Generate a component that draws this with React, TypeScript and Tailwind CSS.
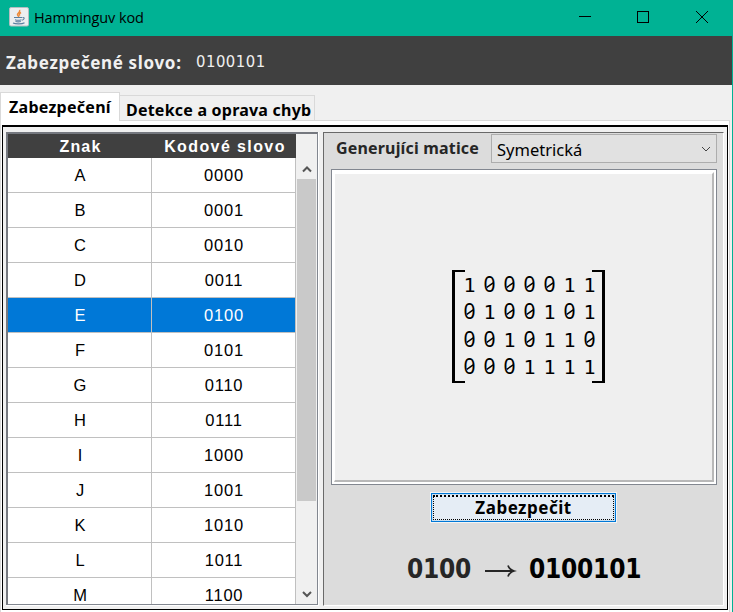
const uiFont = "font-['Noto_Sans',sans-serif]";
const digitFont = "font-['DejaVu_Sans_Condensed','DejaVu_Sans',sans-serif] [font-stretch:condensed]";

const rows = [
  ['A', '0000'], ['B', '0001'], ['C', '0010'], ['D', '0011'], ['E', '0100'],
  ['F', '0101'], ['G', '0110'], ['H', '0111'], ['I', '1000'], ['J', '1001'],
  ['K', '1010'], ['L', '1011'], ['M', '1100'],
];

const matrix = ['1000011', '0100101', '0010110', '0001111'];

function JavaIcon() {
  return (
    <svg width="20" height="20" viewBox="0 0 20 20" className="-mt-0.5 ml-[9px] shrink-0">
      <rect x="0.5" y="0.5" width="19" height="18.5" rx="1.5" fill="#eceef0" stroke="#b5bdc2" />
      <path d="M10.5 3c1.500 2-2.500 3-2 4.700.2 1 1.500 1.300 1.200 2.600M12 5.500c-1.500.9-2.200 1.700-1.200 3.200" fill="none" stroke="#ee8b3a" strokeWidth="1.500" />
      <path d="M5 10.500h8M6 12.700c2 .7 4.500.7 6.500 0M6.500 14.500c2 .6 3.500.6 5.300 0M4 16c2.500 1.200 9 1.200 11.500-.3M13.500 10.500c2.500-.3 2 2-.4 2.800" fill="none" stroke="#5a7f9f" strokeWidth="1.100" />
    </svg>
  );
}

function TitleBar() {
  return (
    <div className="flex h-9 items-center bg-[#00b294] text-black">
      <JavaIcon />
      <span className="ml-[5px] grow whitespace-nowrap font-['Open_Sans',sans-serif] text-[14.500px] leading-none tracking-[-0.100px]">Hamminguv kod</span>
      <svg width="155" height="36" viewBox="578 0 155 36" fill="none" stroke="#000" className="shrink-0" shapeRendering="crispEdges">
        <path d="M579 16.500h12M637.500 11.500h11v11h-11z" />
        <path d="M696 11l12 12M708 11l-12 12" shapeRendering="auto" />
      </svg>
    </div>
  );
}

function CodeTable() {
  return (
    <div className="flex h-[474px] w-[313px] shrink-0 border-r border-b border-white">
      <div className="flex w-[312px] overflow-hidden border-t-2 border-r border-b border-l-2 border-[#75787f] border-r-[#828790] border-b-[#828790] bg-white">
        <div className="w-[288px] shrink-0 font-['Liberation_Sans',Arial,sans-serif]">
          <div className="flex h-6 items-center bg-[#404040] pt-px text-[16px] font-bold text-white">
            <div className="w-36 pl-px text-center tracking-[1.200px]">Znak</div>
            <div className="w-36 pl-0.5 text-center whitespace-nowrap tracking-[1.400px]">Kodové slovo</div>
          </div>
          {rows.map(([sign, code]) => (
            <div
              key={sign}
              className={`flex h-[35px] text-[16.500px] leading-[35px] ${sign === 'E' ? 'bg-[#0078d7] text-white' : 'bg-white text-black'}`}
            >
              <div className="w-36 border-r border-b border-[#c0c0c0] pl-px text-center">{sign}</div>
              <div className="w-36 border-r border-b border-[#c0c0c0] pl-px text-center tracking-[0.800px]">{code}</div>
            </div>
          ))}
        </div>
        <div className="flex w-[21px] flex-col items-center bg-[#f0f0f0] pr-px pl-px">
          <svg width="19" height="45" viewBox="0 0 19 45" fill="none" stroke="#555" strokeWidth="2" className="shrink-0">
            <path d="M6 37.500l4-4 4 4" />
          </svg>
          <div className="h-[322px] w-[19px] shrink-0 bg-[#c9c9c9]" />
          <svg width="19" height="103" viewBox="0 0 19 103" fill="none" stroke="#555" strokeWidth="2" className="shrink-0">
            <path d="M6 91l4 4 4-4" />
          </svg>
        </div>
      </div>
    </div>
  );
}

function Zero() {
  return (
    <span className="relative w-5 text-center font-['Noto_Sans',sans-serif] text-[21px] text-black">
      0
      <svg width="8" height="8" viewBox="0 0 8 8" className="absolute top-[10px] left-[6px]">
        <path d="M0.800 6.300L7.200 1.800" stroke="#000" strokeWidth="1.500" />
      </svg>
    </span>
  );
}

function MatrixView() {
  return (
    <div className="-mt-0.5 flex h-[113px] w-[153px] justify-between">
      <div className="w-[13px] shrink-0 border-y-2 border-l-3 border-black" />
      <div className="-mr-[11px] -ml-[9px] flex flex-col pt-px">
        {matrix.map((line) => (
          <div key={line} className="flex h-[27.500px] items-baseline leading-[27.500px]">
            {line.split('').map((digit, i) =>
              digit === '0' ? (
                <Zero key={i} />
              ) : (
                <span key={i} className="w-5 text-center font-['DejaVu_Sans_Mono',monospace] text-[20px] text-black">1</span>
              ),
            )}
          </div>
        ))}
      </div>
      <div className="w-[13px] shrink-0 border-y-2 border-r-3 border-black" />
    </div>
  );
}

function GeneratorPanel() {
  return (
    <div className="ml-1 flex h-[474px] w-[401px] flex-col border border-t-[#696969] border-r-white border-b-white border-l-[#696969] bg-[#dcdcdc]">
      <div className="flex h-[36px] pt-px">
        <div className="ml-3 w-[155px] text-[16px] leading-[29px] font-bold tracking-[0.170px] whitespace-nowrap text-[#262626]">Generujíci matice</div>
        <div className="flex h-[29px] w-[226px] items-center border border-[#adadad] bg-[#e1e1e1] text-black">
          <span className="grow pt-1 pl-[5px] text-[16.500px] leading-none">Symetrická</span>
          <svg width="12" height="8" viewBox="0 0 12 8" fill="none" stroke="#444" className="mr-1">
            <path d="M2 2l4 4 4-4" />
          </svg>
        </div>
      </div>
      <div className="ml-[7px] h-[316px] w-[386px] shrink-0 border border-[#828790] bg-white p-0.5">
        <div className="flex h-full items-center border-t-2 border-r-2 border-b-2 border-l border-t-white border-r-[#b8b8b8] border-b-[#b8b8b8] border-l-white bg-[#efefef] pl-[117px]">
          <MatrixView />
        </div>
      </div>
      <button className="mt-[7px] ml-[106px] h-[31px] w-[187px] shrink-0 border border-[#f4f4f4]">
        <span className="block h-[29px] border border-[#0078d7] bg-[#c7def0] p-px">
          <span className="block h-[25px] border border-t-2 border-dotted border-black bg-[#e5edf5] text-[17px] leading-[22px] font-bold tracking-[0.500px] text-black">Zabezpečit</span>
        </span>
      </button>
      <div className={`mt-[28px] ml-[83px] flex h-9 items-center text-[26px] leading-9 font-bold tracking-[-0.250px] ${digitFont}`}>
        <span className="w-[64px] text-[#262626]">0100</span>
        <svg width="32" height="16" viewBox="0 0 32 16" fill="none" stroke="#262626" strokeWidth="1.800" className="mt-1 ml-[14px]">
          <path d="M0 8h29M23 2.500c1 3 3.500 4.700 6 5.500-2.500.8-5 2.500-6 5.500" />
        </svg>
        <span className="ml-[12px] text-black">0100101</span>
      </div>
    </div>
  );
}

export default function App() {
  return (
    <div className={`h-[612px] w-[733px] overflow-hidden bg-[#f0f0f0] ${uiFont}`}>
      <TitleBar />
      <div className="h-[576px] border-r border-[#00b294]">
        <div className="flex h-[49px] items-center bg-[#404040] pl-1.5 whitespace-nowrap text-[#f0f0f0]">
          <span className="w-[190px] pt-[3px] text-[17px] leading-none font-bold tracking-[0.670px]">Zabezpečené slovo:</span>
          <span className={`pt-1 text-[16.500px] leading-none tracking-[0.500px] ${digitFont}`}>0100101</span>
        </div>
        <div className="flex h-[35px] items-end pt-2 text-[16px] font-bold whitespace-nowrap text-black">
          <div className="z-10 -mb-px h-[29px] w-[120px] shrink-0 border border-b-0 border-[#d9d9d9] bg-white pl-2 leading-[28px] tracking-[0.270px]">Zabezpečení</div>
          <div className="h-[25px] w-[195px] border-t border-r border-[#d9d9d9] pl-1.5 leading-[28px] tracking-[0.220px]">Detekce a oprava chyb</div>
        </div>
        <div className="h-[492px] w-[730px] border-t border-r border-l border-[#d9d9d9] bg-white pt-1 pr-px pl-px">
          <div className="flex h-[485px] border border-t-2 border-black bg-[#f0f0f0] pt-[5px] pl-[3px]">
            <CodeTable />
            <GeneratorPanel />
          </div>
        </div>
      </div>
    </div>
  );
}
